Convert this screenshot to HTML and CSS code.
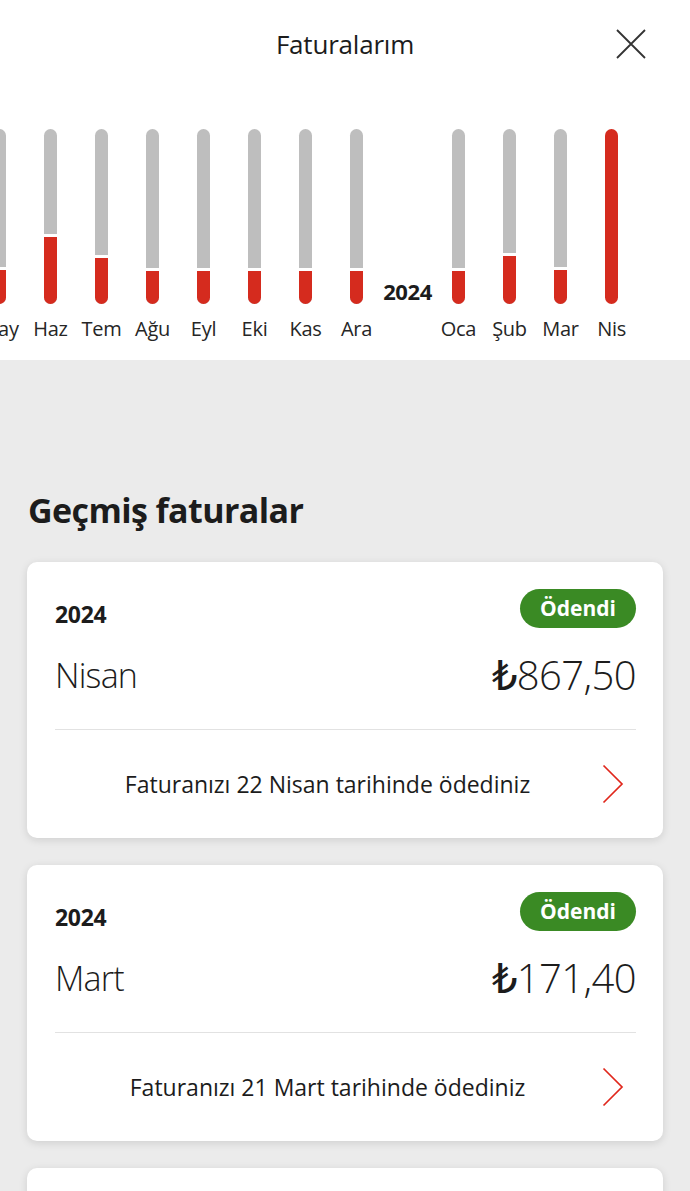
FILE: index.html
```html
<html>
<head>
    <title>Faturalarım</title>
    <link rel="stylesheet" href="styles.css">
</head>
<body>
    <div class="top">
        <div class="header">
            <div></div>
            <div class="title">Faturalarım</div>
            <div class="close">
                <svg width="30" height="30" viewBox="0 0 30 30"><path d="M1 1 L29 29 M29 1 L1 29" stroke="#333" stroke-width="1.8" fill="none"/></svg>
            </div>
        </div>
        <div class="chart">
            <div class="col"><div class="bar"><div class="fill" style="height:34px"></div></div><div class="label">May</div></div>
            <div class="col"><div class="bar"><div class="fill" style="height:67px"></div></div><div class="label">Haz</div></div>
            <div class="col"><div class="bar"><div class="fill" style="height:46px"></div></div><div class="label">Tem</div></div>
            <div class="col"><div class="bar"><div class="fill" style="height:33px"></div></div><div class="label">Ağu</div></div>
            <div class="col"><div class="bar"><div class="fill" style="height:33px"></div></div><div class="label">Eyl</div></div>
            <div class="col"><div class="bar"><div class="fill" style="height:33px"></div></div><div class="label">Eki</div></div>
            <div class="col"><div class="bar"><div class="fill" style="height:33px"></div></div><div class="label">Kas</div></div>
            <div class="col"><div class="bar"><div class="fill" style="height:33px"></div></div><div class="label">Ara</div></div>
            <div class="col"><div class="year">2024</div></div>
            <div class="col"><div class="bar"><div class="fill" style="height:33px"></div></div><div class="label">Oca</div></div>
            <div class="col"><div class="bar"><div class="fill" style="height:48px"></div></div><div class="label">Şub</div></div>
            <div class="col"><div class="bar"><div class="fill" style="height:34px"></div></div><div class="label">Mar</div></div>
            <div class="col"><div class="bar"><div class="fill full" style="height:175px"></div></div><div class="label">Nis</div></div>
        </div>
    </div>
    <div class="history">
        <h2>Geçmiş faturalar</h2>

        <div class="card">
            <div class="card-top">
                <span class="card-year">2024</span>
                <span class="badge">Ödendi</span>
            </div>
            <div class="card-main">
                <span class="month">Nisan</span>
                <span class="amount"><span class="lira">₺</span>867,50</span>
            </div>
            <div class="card-foot">
                <span class="note">Faturanızı 22 Nisan tarihinde ödediniz</span>
                <svg class="chevron" width="24" height="40" viewBox="0 0 24 40"><path d="M3.5 1.5 L22 20 L3.5 38.5" stroke="#e0271c" stroke-width="1.7" fill="none"/></svg>
            </div>
        </div>

        <div class="card">
            <div class="card-top">
                <span class="card-year">2024</span>
                <span class="badge">Ödendi</span>
            </div>
            <div class="card-main">
                <span class="month">Mart</span>
                <span class="amount"><span class="lira">₺</span>171,40</span>
            </div>
            <div class="card-foot">
                <span class="note">Faturanızı 21 Mart tarihinde ödediniz</span>
                <svg class="chevron" width="24" height="40" viewBox="0 0 24 40"><path d="M3.5 1.5 L22 20 L3.5 38.5" stroke="#e0271c" stroke-width="1.7" fill="none"/></svg>
            </div>
        </div>

        <div class="card"></div>
    </div>
</body>
</html>
```

FILE: styles.css
```css
body {
    margin: 0;
    font-family: "Open Sans", "DejaVu Sans", sans-serif;
    color: #1c1c1c;
    background-color: #ebebeb;
    overflow: hidden;
}
.top {
    background-color: #fff;
    overflow: hidden;
}
.header {
    display: grid;
    grid-template-columns: 1fr auto 1fr;
    align-items: center;
    height: 88px;
}
.title {
    font-size: 26px;
    letter-spacing: -0.2px;
}
.close {
    justify-self: end;
    margin-right: 44px;
    height: 30px;
}
.chart {
    display: flex;
    margin-left: -26px;
    padding-top: 41px;
    padding-bottom: 19px;
}
.col {
    flex: 0 0 51px;
    display: flex;
    flex-direction: column;
    align-items: center;
}
.bar {
    width: 13px;
    height: 175px;
    border-radius: 7px;
    background-color: #bebebe;
    overflow: hidden;
    display: flex;
    flex-direction: column;
    justify-content: flex-end;
}
.fill {
    background-color: #d52b1e;
    border-top: 3px solid #fff;
    flex-shrink: 0;
}
.fill.full {
    border-top: none;
}
.label {
    margin-top: 13px;
    font-size: 20px;
    line-height: 24px;
    color: #262626;
    letter-spacing: -0.3px;
}
.year {
    height: 175px;
    display: flex;
    align-items: flex-end;
    font-size: 22px;
    font-weight: 700;
    line-height: 26px;
    letter-spacing: -0.4px;
}
.history {
    padding: 130px 27px 0 27px;
}
.history h2 {
    margin: 0 0 32px 1px;
    font-size: 34px;
    line-height: 40px;
    font-weight: 700;
    letter-spacing: -0.6px;
}
.card {
    background-color: #fff;
    border-radius: 10px;
    box-shadow: 0 2px 8px rgba(0, 0, 0, 0.12);
    padding: 27px 27px 0 28px;
    margin-bottom: 27px;
    min-height: 200px;
}
.card-top {
    display: flex;
    justify-content: space-between;
    align-items: flex-end;
}
.card-year {
    font-size: 23px;
    font-weight: 700;
    line-height: 28px;
    letter-spacing: -0.3px;
}
.badge {
    background-color: #3a8a24;
    color: #fff;
    font-size: 21px;
    font-weight: 700;
    line-height: 39px;
    padding: 0 20px;
    border-radius: 20px;
}
.card-main {
    display: flex;
    justify-content: space-between;
    align-items: center;
    margin-top: 25px;
    padding-bottom: 32px;
    border-bottom: 1px solid #e2e2e2;
    font-weight: 300;
}
.month {
    font-size: 34px;
    line-height: 44px;
    letter-spacing: -0.8px;
}
.amount {
    font-size: 40px;
    line-height: 44px;
    letter-spacing: -0.6px;
}
.lira {
    font-weight: 500;
}
.card-foot {
    display: flex;
    align-items: center;
    height: 108px;
}
.note {
    flex: 1;
    text-align: center;
    font-size: 23px;
}
.chevron {
    margin-right: 12px;
}
```
